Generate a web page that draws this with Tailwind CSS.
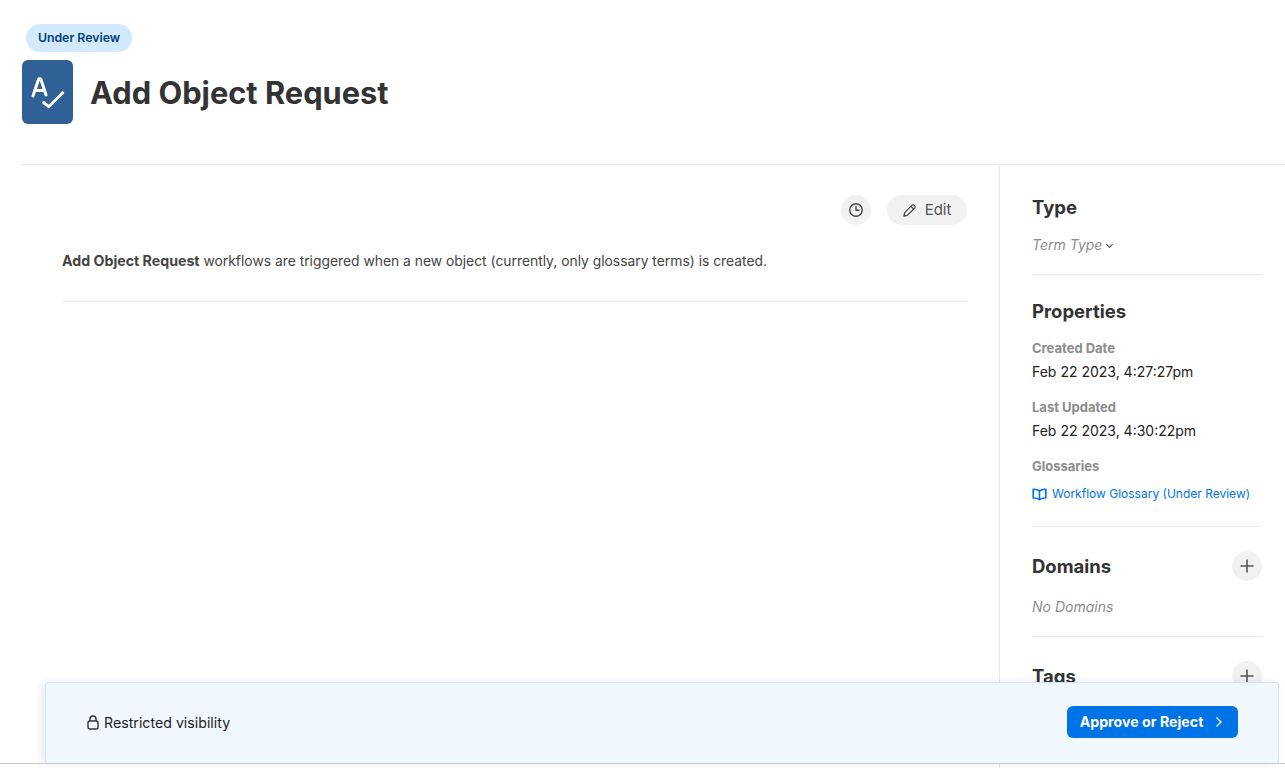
<!DOCTYPE html>
<html lang="en">
<head>
<meta charset="utf-8">
<title>Add Object Request</title>
<script src="https://cdn.jsdelivr.net/npm/@tailwindcss/browser@4"></script>
</head>
<body class="bg-white">
<div class="relative h-[768px] w-[1285px] overflow-hidden bg-white font-['Inter','Roboto',sans-serif] text-[#333]">
  <header class="h-[165px] ml-[22px] border-b border-[#e9e9e9] pt-[24px]">
    <div class="ml-[4px] w-[106px] h-[28px] rounded-full bg-[#d3e9fd] flex items-center justify-center text-[12.3px] font-semibold text-[#004080]">Under Review</div>
    <div class="mt-[8px] flex items-center gap-[17px]">
      <div class="w-[51px] h-[64px] rounded-[6px] bg-[#2f6096]">
        <svg width="51" height="64" viewBox="0 0 51 64" fill="none" stroke="white" stroke-width="3" stroke-linecap="round" stroke-linejoin="round"><path d="M11 36 L16.5 19.5 Q17.5 17.5 19 19.5 L24 35"/><path d="M13 30.5 H22.5"/><path d="M21.5 42.5 L26.7 46.7 L40.7 32.7"/></svg>
      </div>
      <h1 class="mt-[2px] text-[30.8px] font-bold leading-[36px] text-[#333]">Add Object Request</h1>
    </div>
  </header>
  <div class="flex ml-[22px] h-[603px]">
    <main class="w-[978px] border-r border-[#e9e9e9] pl-[40px] pr-[32px] pt-[30px]">
      <div class="flex justify-end gap-[16px]">
        <button class="w-[30px] h-[30px] rounded-full bg-[#f1f1f1] flex items-center justify-center">
          <svg width="16" height="16" viewBox="0 0 16 16" fill="none" stroke="#444" stroke-width="1.4" stroke-linecap="round" stroke-linejoin="round"><circle cx="8" cy="8" r="6.3"/><path d="M8 4.5V8.3H11"/></svg>
        </button>
        <button class="w-[80px] h-[30px] rounded-full bg-[#f1f1f1] flex items-center justify-center gap-[8px] pr-[1px] text-[15px] leading-[20px] text-[#555]">
          <svg width="15" height="15" viewBox="0 0 16 16" fill="none" stroke="#444" stroke-width="1.3" stroke-linecap="round" stroke-linejoin="round"><path d="M2 14 L2.8 10.3 L10.8 2.3 Q12 1.3 13.2 2.5 L13.6 3 Q14.6 4.2 13.6 5.3 L5.6 13.2 Z"/><path d="M9.6 3.6 L12.4 6.5"/></svg>
          Edit
        </button>
      </div>
      <p class="mt-[26px] text-[13.85px] leading-[20px] text-[#444]"><strong class="font-bold text-[14.2px]">Add Object Request</strong> workflows are triggered when a new object (currently, only glossary terms) is created.</p>
      <div class="mt-[30px] border-t border-[#e9e9e9]"></div>
    </main>
    <aside class="w-[285px] pl-[32px] pr-[23px] pt-[29px]">
      <h2 class="text-[18.5px] font-bold leading-[26px]">Type</h2>
      <div class="mt-[15px] flex items-center gap-[3px] text-[14px] leading-[20px] italic text-[#8c8c8c]">Term Type
        <svg width="9" height="9" viewBox="0 0 10 10" fill="none" stroke="#555" stroke-width="1.3"><path d="M1.5 3.5 L5 7 L8.5 3.5"/></svg>
      </div>
      <div class="mt-[19px] border-t border-[#e9e9e9]"></div>
      <h2 class="mt-[23px] text-[18.5px] font-bold leading-[26px]">Properties</h2>
      <div class="mt-[16px] text-[13px] font-bold leading-[16px] text-[#8c8c8c]">Created Date</div>
      <div class="mt-[6px] text-[14px] leading-[20px] text-[#222]">Feb 22 2023, 4:27:27pm</div>
      <div class="mt-[17px] text-[13px] font-bold leading-[16px] text-[#8c8c8c]">Last Updated</div>
      <div class="mt-[6px] text-[14px] leading-[20px] text-[#222]">Feb 22 2023, 4:30:22pm</div>
      <div class="mt-[17px] text-[13px] font-bold leading-[16px] text-[#8c8c8c]">Glossaries</div>
      <div class="mt-[11px] flex items-center gap-[5px] text-[12px] leading-[18px] text-[#0073e6]">
        <svg width="15" height="13" viewBox="0 0 15 13" fill="none" stroke="#0073e6" stroke-width="1.6" stroke-linejoin="round"><path d="M7.5 3 Q5.5 1 1.2 1.2 V10 Q5 9.8 7.5 11.6 Q10 9.8 13.8 10 V1.2 Q9.5 1 7.5 3 Z"/><path d="M7.5 3 V11.6"/></svg>
        Workflow Glossary (Under Review)
      </div>
      <div class="mt-[23px] border-t border-[#e9e9e9]"></div>
      <div class="mt-[24px] flex items-center justify-between h-[30px]">
        <h2 class="text-[18.5px] font-bold leading-[26px]">Domains</h2>
        <button class="w-[30px] h-[30px] rounded-full bg-[#f1f1f1] flex items-center justify-center">
          <svg width="14" height="14" viewBox="0 0 14 14" stroke="#555" stroke-width="1.6" stroke-linecap="round"><path d="M7 1V13M1 7H13"/></svg>
        </button>
      </div>
      <div class="mt-[16px] text-[14px] leading-[20px] italic text-[#8c8c8c]">No Domains</div>
      <div class="mt-[19px] border-t border-[#e9e9e9]"></div>
      <div class="mt-[24px] flex items-center justify-between h-[30px]">
        <h2 class="text-[18.5px] font-bold leading-[26px]">Tags</h2>
        <button class="w-[30px] h-[30px] rounded-full bg-[#f1f1f1] flex items-center justify-center">
          <svg width="14" height="14" viewBox="0 0 14 14" stroke="#555" stroke-width="1.6" stroke-linecap="round"><path d="M7 1V13M1 7H13"/></svg>
        </button>
      </div>
    </aside>
  </div>
  <div class="absolute left-[45px] top-[682px] w-[1234px] h-[82px] rounded-[3px] bg-[#f0f7ff] border border-[#cfe4f8] shadow-[-4px_0_8px_rgba(0,0,0,0.08)] flex items-center justify-between pl-[41px] pr-[40px]">
    <div class="flex items-center gap-[5px] text-[14.2px] text-[#222]">
      <svg class="-mt-[1px]" width="12" height="15" viewBox="0 0 12 15" fill="none" stroke="#333" stroke-width="1.4"><rect x="1" y="6" width="10" height="8" rx="2"/><path d="M3 6V4a3 3 0 0 1 6 0V6"/></svg>
      Restricted visibility
    </div>
    <button class="w-[171px] h-[32px] -mt-[2px] pr-[2px] rounded-[6px] bg-[#0073e6] flex items-center justify-center gap-[12px] text-[14.2px] font-bold text-white">
      Approve or Reject
      <svg width="8" height="12" viewBox="0 0 8 12" fill="none" stroke="white" stroke-width="1.3"><path d="M1.5 1.5 L6 6 L1.5 10.5"/></svg>
    </button>
  </div>
  <div class="absolute left-0 right-0 top-[763px] h-[1px] bg-[#c9c9c9]"></div>
</div>
</body>
</html>
